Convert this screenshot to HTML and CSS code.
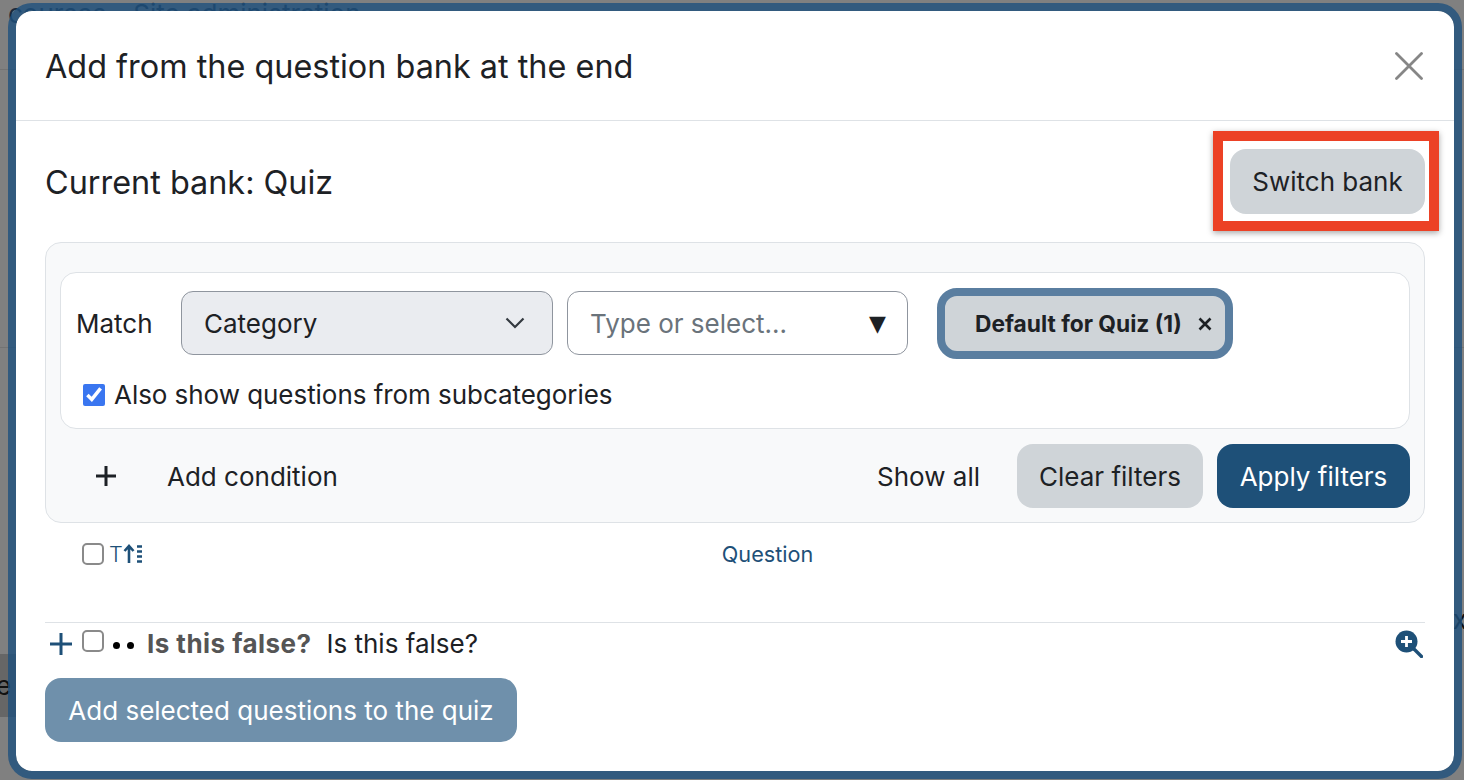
FILE: index.html
```html
<!DOCTYPE html>
<html lang="en">
<head>
    <meta charset="UTF-8">
    <title>Add from the question bank at the end</title>
    <link rel="stylesheet" href="styles.css">
</head>
<body>
    <div class="behind">
        <div class="behind-crumbs"><span>courses</span><span>Site administration</span></div>
        <div class="behind-line behind-line-top"></div>
        <div class="behind-line behind-line-mid"></div>
        <div class="behind-block">e</div>
        <div class="behind-x">ax</div>
    </div>

    <div class="modal">
        <div class="modal-header">
            <h1>Add from the question bank at the end</h1>
            <svg class="close-icon" viewBox="0 0 28 28" width="28" height="28">
                <path d="M1.5 1.5 L26.5 26.5 M26.5 1.5 L1.5 26.5" stroke="#868686" stroke-width="2.8" stroke-linecap="round" fill="none"/>
            </svg>
        </div>

        <div class="modal-body">
            <div class="bank-row">
                <h2>Current bank: Quiz</h2>
                <div class="highlight">
                    <button class="btn btn-grey btn-switch">Switch bank</button>
                </div>
            </div>

            <div class="filters">
                <div class="condition">
                    <div class="condition-top">
                        <span class="match">Match</span>
                        <div class="select">
                            <span>Category</span>
                            <svg viewBox="0 0 20 12" width="20" height="12">
                                <path d="M1.5 1.5 L10 10 L18.5 1.5" stroke="#343a40" stroke-width="2.2" fill="none"/>
                            </svg>
                        </div>
                        <div class="combo">
                            <span>Type or select...</span>
                            <span class="combo-arrow">&#9660;</span>
                        </div>
                        <div class="chip">
                            <span>Default for Quiz (1)</span>
                            <svg viewBox="0 0 14 14" width="14" height="14">
                                <path d="M1.5 1.5 L12.5 12.5 M12.5 1.5 L1.5 12.5" stroke="#1d2125" stroke-width="2.6" fill="none"/>
                            </svg>
                        </div>
                    </div>
                    <label class="subcats">
                        <input type="checkbox" class="checked-box" checked>
                        <span>Also show questions from subcategories</span>
                    </label>
                </div>

                <div class="filter-actions">
                    <svg class="add-icon" viewBox="0 0 22 22" width="22" height="22">
                        <path d="M11 1 V21 M1 11 H21" stroke="#1d2125" stroke-width="3" fill="none"/>
                    </svg>
                    <span class="add-label">Add condition</span>
                    <span class="show-all">Show all</span>
                    <button class="btn btn-grey btn-clear">Clear filters</button>
                    <button class="btn btn-primary">Apply filters</button>
                </div>
            </div>

            <div class="table-head">
                <input type="checkbox" class="plain-box">
                <span class="sort-t">T</span>
                <svg class="sort-icon" viewBox="0 0 20 20" width="20" height="20">
                    <path d="M6 19 V3 M1.5 7 L6 2 L10.5 7" stroke="#1e5078" stroke-width="2.6" fill="none"/>
                    <path d="M14 2.5 H19 M14 7.5 H19 M14 12.5 H19 M14 17.5 H19" stroke="#1e5078" stroke-width="2.6" fill="none"/>
                </svg>
                <span class="question-head">Question</span>
            </div>

            <div class="question-row">
                <svg class="row-plus" viewBox="0 0 24 24" width="24" height="24">
                    <path d="M12 1 V23 M1 12 H23" stroke="#1e5078" stroke-width="3" fill="none"/>
                </svg>
                <input type="checkbox" class="plain-box">
                <span class="dots">
                    <i></i><i></i>
                </span>
                <strong>Is this false?</strong>
                <span class="question-text">Is this false?</span>
                <svg class="zoom-icon" viewBox="0 0 28 28" width="28" height="28">
                    <circle cx="11.5" cy="11.5" r="11" fill="#1e5078"/>
                    <path d="M11.5 6 V17 M6 11.5 H17" stroke="#fff" stroke-width="2.8"/>
                    <path d="M19 19 L26.5 26.5" stroke="#1e5078" stroke-width="3.4" stroke-linecap="round"/>
                </svg>
            </div>

            <button class="btn btn-disabled">Add selected questions to the quiz</button>
        </div>
    </div>
</body>
</html>
```

FILE: styles.css
```css
html, body {
    height: 100%;
}
body {
    margin: 0;
    box-sizing: border-box;
    height: 780px;
    overflow: hidden;
    position: relative;
    padding: 3px 2px 0 8px;
    background-color: #808080;
    color: #1d2125;
    font-family: Inter, "Liberation Sans", sans-serif;
    font-size: 26px;
}
h1, h2 {
    margin: 0;
    font-weight: 400;
}

/* page behind the backdrop */
.behind-crumbs {
    position: absolute;
    left: 8px;
    top: 1px;
    display: flex;
    gap: 27px;
    line-height: 26px;
    color: #1a2a3a;
}
.behind-line {
    position: absolute;
    left: 0;
    right: 0;
    height: 1px;
    background-color: #737373;
}
.behind-line-top {
    top: 69px;
}
.behind-line-mid {
    top: 347px;
}
.behind-block {
    position: absolute;
    left: 0;
    top: 654px;
    width: 16px;
    height: 63px;
    background-color: #666;
    line-height: 63px;
    text-indent: -4px;
    color: #111;
}
.behind-x {
    position: absolute;
    right: -3px;
    top: 604px;
    color: #111;
}

.modal {
    position: relative;
    box-sizing: border-box;
    height: 776px;
    border: 8px solid rgba(30, 80, 125, 0.8);
    border-radius: 24px;
    background-color: #fff;
    background-clip: padding-box;
}
.modal-header {
    display: flex;
    justify-content: space-between;
    align-items: center;
    height: 110px;
    box-sizing: border-box;
    padding: 0 31px 0 29px;
    border-bottom: 1px solid #dee2e6;
}
.modal-header h1 {
    padding-top: 2px;
    font-size: 32.4px;
}
.modal-body {
    padding: 0 29px;
}
.bank-row {
    display: flex;
    justify-content: space-between;
    align-items: center;
    height: 121px;
}
.bank-row h2 {
    padding-top: 2px;
    font-size: 32.4px;
}
.highlight {
    box-sizing: border-box;
    width: 226px;
    height: 100px;
    margin-right: -14px;
    margin-bottom: 2px;
    padding: 8px 4px 7px 7px;
    border: 10px solid #ec4125;
    box-shadow: 0 2px 6px rgba(0, 0, 0, 0.35);
    display: flex;
}

.btn {
    height: 64px;
    padding: 0 23px;
    border: 0;
    border-radius: 16px;
    font-family: inherit;
    font-size: 26px;
    color: #1d2125;
}
.btn-grey {
    background-color: #cfd4d8;
}
.btn-switch {
    width: 195px;
    height: 65px;
    padding: 0;
}
.btn-clear {
    width: 186px;
    padding: 0;
}
.btn-primary {
    width: 193px;
    padding: 0;
    background-color: #1e5078;
    color: #fff;
}
.btn-disabled {
    width: 472px;
    padding: 0;
    background-color: #6f90ab;
    color: #fff;
}

.filters {
    box-sizing: border-box;
    height: 281px;
    padding: 29px 14px 0;
    background-color: #f8f9fa;
    border: 1px solid #dee2e6;
    border-radius: 16px;
}
.condition {
    box-sizing: border-box;
    height: 157px;
    padding: 15px 15px 0;
    background-color: #fff;
    border: 1px solid #dee2e6;
    border-radius: 16px;
}
.condition-top {
    display: flex;
    align-items: center;
    height: 71px;
}
.match {
    width: 105px;
}
.select {
    box-sizing: border-box;
    display: flex;
    justify-content: space-between;
    align-items: center;
    width: 372px;
    height: 64px;
    margin-bottom: 1px;
    padding: 0 27px 0 22px;
    background-color: #eaecf0;
    border: 1px solid #8f959e;
    border-radius: 12px;
}
.combo {
    box-sizing: border-box;
    display: flex;
    justify-content: space-between;
    align-items: center;
    width: 341px;
    height: 64px;
    margin-left: 14px;
    margin-bottom: 1px;
    padding: 0 21px 0 22px;
    border: 1px solid #8f959e;
    border-radius: 12px;
    color: #6a737b;
}
.combo-arrow {
    color: #1d2125;
    font-family: "DejaVu Sans", sans-serif;
    font-size: 22px;
}
.chip {
    box-sizing: border-box;
    display: flex;
    align-items: center;
    justify-content: space-between;
    width: 296px;
    height: 71px;
    margin-left: 29px;
    padding: 0 13px 0 30px;
    background-color: #cfd4d8;
    border: 8px solid #5a7ea0;
    border-radius: 20px;
    font-size: 22.75px;
    font-weight: 700;
}
.subcats {
    display: flex;
    align-items: center;
    gap: 9px;
    margin-top: 20px;
    margin-left: 7px;
    letter-spacing: -0.05px;
}
.checked-box {
    width: 22px;
    height: 22px;
    margin: 0;
    accent-color: #3a76f0;
}
.plain-box {
    appearance: none;
    box-sizing: border-box;
    width: 22px;
    height: 22px;
    margin: 0;
    border: 2px solid #8a8a8a;
    border-radius: 5px;
    background-color: #fff;
}

.filter-actions {
    display: flex;
    align-items: center;
    margin-top: 15px;
}
.add-icon {
    margin-left: 35px;
}
.add-label {
    margin-left: 50px;
}
.show-all {
    margin-left: auto;
    margin-right: 37px;
}
.filter-actions .btn-primary {
    margin-left: 14px;
}

.table-head {
    display: flex;
    align-items: center;
    height: 62px;
    padding-left: 37px;
    color: #1e5078;
    font-size: 21.67px;
}
.sort-t {
    margin-left: 5px;
    font-weight: 300;
}
.question-head {
    margin-left: 579px;
}

.question-row {
    display: flex;
    align-items: center;
    height: 41px;
    margin-top: 37px;
    padding: 0 0 0 4px;
    border-top: 1px solid #dee2e6;
}
.row-plus {
    width: 24px;
}
.question-row input {
    margin: -6px 0 0 9px;
}
.dots {
    display: flex;
    gap: 7px;
    margin: 4px 13px 0 9px;
}
.dots i {
    width: 7px;
    height: 7px;
    border-radius: 50%;
    background-color: #000;
}
.question-row strong {
    color: #555;
    font-weight: 700;
    letter-spacing: 0.45px;
}
.question-text {
    margin-left: 15px;
}
.zoom-icon {
    margin-left: auto;
    margin-right: 2px;
}
.modal-body > .btn-disabled {
    margin-top: 14px;
}
```
